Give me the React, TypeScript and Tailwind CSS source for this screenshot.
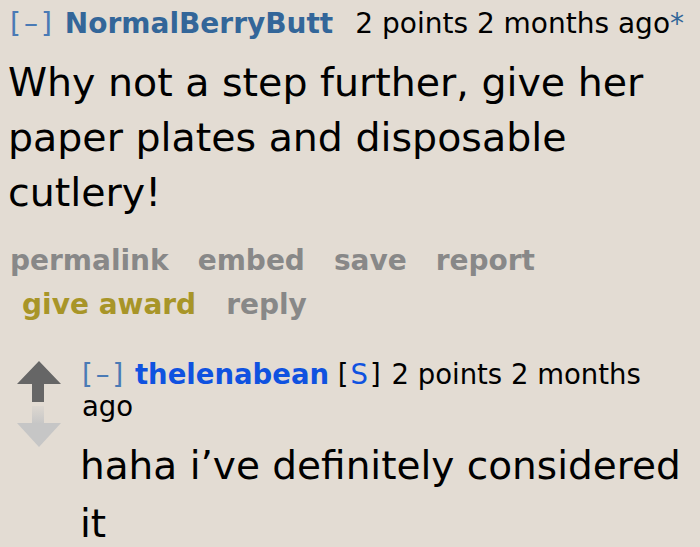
import React from 'react'

function UpArrow() {
  return (
    <svg width="44" height="42" viewBox="0 0 44 42">
      <path d="M22 0 L44 23 L27 23 L27 41 L15 41 L15 23 L0 23 Z" fill="#666666" />
    </svg>
  )
}

function DownArrow() {
  return (
    <svg width="44" height="42" viewBox="0 0 44 42">
      <defs>
        <linearGradient id="dstem" x1="0" y1="0" x2="0" y2="1">
          <stop offset="0" stopColor="#c6c6c6" stopOpacity="0.2" />
          <stop offset="1" stopColor="#c6c6c6" />
        </linearGradient>
      </defs>
      <rect x="15" y="0" width="12" height="18" fill="url(#dstem)" />
      <path d="M0 17 L44 17 L22 41 Z" fill="#c6c6c6" />
    </svg>
  )
}

export default function App() {
  return (
    <div className="w-[700px] h-[547px] overflow-hidden bg-[#e3dcd3] font-['DejaVu_Sans',sans-serif] text-black">
      <div className="pl-[10px]">
        {/* parent comment header */}
        <div className="pt-[2px] text-[28px] leading-[44px] whitespace-nowrap">
          <span className="text-[#4a7ab5] tracking-[3px]">[–]</span>
          <span className="ml-[10px] font-bold text-[#336699]">NormalBerryButt</span>
          <span className="ml-[22px]">2 points 2 months ago</span>
          <span className="text-[#336699]">*</span>
        </div>

        {/* parent comment body */}
        <div className="mt-[9px] -ml-[2px] text-[39.5px] leading-[55px] pr-[20px]">
          Why not a step further, give her paper plates and disposable cutlery!
        </div>

        {/* actions */}
        <div className="mt-[19px] text-[28px] leading-[44px] font-bold text-[#888888]">
          <div className="flex gap-[29px]">
            <span>permalink</span>
            <span>embed</span>
            <span>save</span>
            <span>report</span>
          </div>
          <div className="flex gap-[30px] pl-[12px]">
            <span className="text-[#a89528]">give award</span>
            <span>reply</span>
          </div>
        </div>

        {/* reply */}
        <div className="flex mt-[31px]">
          <div className="flex flex-col gap-[3px] pl-[7px] pt-[3px] w-[70px] shrink-0">
            <UpArrow />
            <DownArrow />
          </div>
          <div className="flex-1">
            <div className="text-[27.5px] leading-[32px] pl-[2px] pr-[30px]">
              <span className="text-[#4a7ab5] tracking-[3px]">[–]</span>{' '}
              <span className="font-bold text-[#0f52e0]">thelenabean</span>{' '}
              <span className="tracking-[2px]">
                [<span className="text-[#0f52e0]">S</span>]
              </span>{' '}
              2 points 2 months ago
            </div>
            <div className="mt-[15px] text-[39px] leading-[58px]">
              haha i’ve definitely considered it
            </div>
          </div>
        </div>
      </div>
    </div>
  )
}
